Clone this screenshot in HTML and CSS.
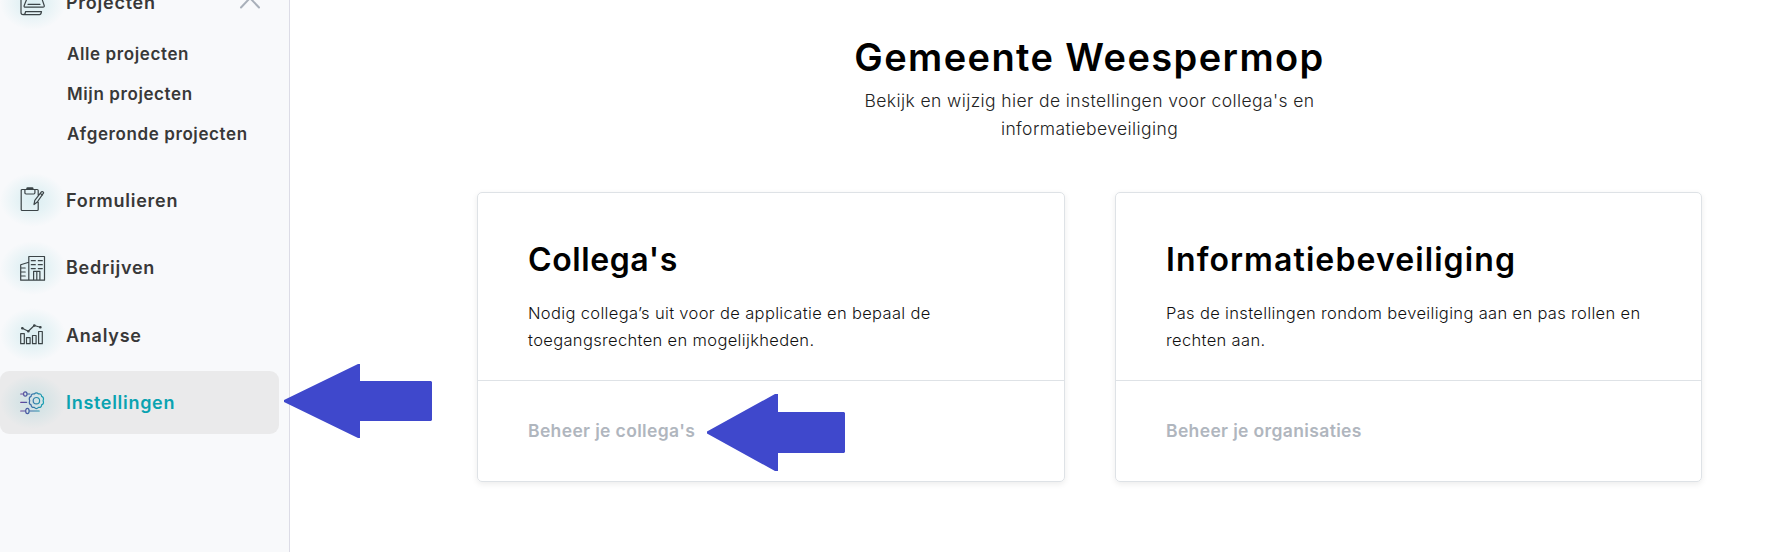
FILE: index.html
```
<!DOCTYPE html>
<html lang="nl">

<head>
    <meta charset="UTF-8">
    <meta name="viewport" content="width=device-width, initial-scale=1.0">
    <title>Instellingen</title>
    <link rel="stylesheet" href="styles.css">
</head>

<body>
    <div class="page">
        <nav class="sidebar">
            <a href="#" class="item">
                <span class="icon">
                    <svg width="26" height="26" viewBox="0 0 26 26">
                        <path d="M1 3v19.500q0 2.200 2.200 2.200h16.300q1.600 0 2-3H5.500q-.2 3-2.300 3M6.800 9 4.200 15.500q-.5 1.700 1.300 1.700H23q1.600 0 1.200-1.700L22 9M8 14.300h12" />
                    </svg>
                </span>
                <span class="label">Projecten</span>
                <svg class="chevron" width="22" height="14" viewBox="0 0 22 14">
                    <path d="M2 11.500 11 2l9 9.500" />
                </svg>
            </a>
            <ul class="sub">
                <li><a href="#">Alle projecten</a></li>
                <li><a href="#">Mijn projecten</a></li>
                <li><a href="#">Afgeronde projecten</a></li>
            </ul>
            <a href="#" class="item">
                <span class="icon">
                    <svg width="26" height="26" viewBox="0 0 26 26">
                        <path d="M5 2.500H2.200q-1 0-1 1v19q0 1 1 1h15q1 0 1-1V15M15 2.500h2.200q1 0 1 1V8M4.900 2.500v3.300q0 1.200 1.200 1.200h7.600q1.200 0 1.200-1.200V2.500zM14 17.500l.8-4.200 6.800-8.600q1.400-.6 2 1.100l-6.300 9.200zM20.300 6.500l2.200 1.500" />
                        <path class="thick" d="M7.500 1.500h4.800" />
                    </svg>
                </span>
                <span class="label">Formulieren</span>
            </a>
            <a href="#" class="item">
                <span class="icon">
                    <svg width="26" height="26" viewBox="0 0 26 26">
                        <path d="M8.800 1.500h15.700v23.700H8.800zM8.800 7.200.7 9.800v15.400h8.100M.7 13h4.500M.7 17h4.500M.7 21h4.500M11.300 5.700h4M18.300 5.700h4M11.300 9.700h4M18.300 9.700h4M11.300 13.600h4M18.300 13.600h4M13.600 25v-8.600h6.300V25M16.800 16.400V25" />
                    </svg>
                </span>
                <span class="label">Bedrijven</span>
            </a>
            <a href="#" class="item">
                <span class="icon">
                    <svg width="26" height="26" viewBox="0 0 26 26">
                        <path d="M.7 11.700h3.600v10H.7zM6.500 15.700h3.600v6H6.500zM12.500 13.500h3.600v8.200h-3.600zM18.600 9.500h3.700v12.200h-3.700zM2.300 6.300l6 3 6-5.800 6 1.800" />
                        <path class="dots" d="M2.300 6.300h.1M8.300 9.300h.1M14.300 3.500h.1M20.300 5.300h.1" />
                    </svg>
                </span>
                <span class="label">Analyse</span>
            </a>
            <a href="#" class="item active">
                <span class="icon">
                    <svg width="26" height="26" viewBox="0 0 26 26">
                        <defs>
                            <linearGradient id="tint" gradientUnits="userSpaceOnUse" x1="0" y1="0" x2="25" y2="0">
                                <stop offset="0" stop-color="#6b3f98" />
                                <stop offset=".35" stop-color="#3f62a6" />
                                <stop offset=".7" stop-color="#2a8cab" />
                                <stop offset="1" stop-color="#13a5b5" />
                            </linearGradient>
                        </defs>
                        <path d="M.7 5h2.900M7 5h2.800M.7 13.300h6M.7 22h5M9.200 22h10M5.300 2.800q1.700 0 1.700 2.200t-1.700 2.200T3.600 5t1.700-2.200zM7.400 19.400q1.700 0 1.700 2.600t-1.700 2.600T5.700 22t1.700-2.600z" />
                        <circle cx="16.400" cy="11.700" r="3.200" />
                        <path d="M14.300 5q2-2.400 4.200 0 3-.5 3.100 2.400 2.800 1.200 1.500 4.300 1.300 3-1.500 4.200-.1 3-3.100 2.500-2.200 2.400-4.200 0-3 .5-3.200-2.500-2.700-1.200-1.400-4.200-1.300-3.100 1.400-4.300Q11.300 4.500 14.300 5z" />
                    </svg>
                </span>
                <span class="label">Instellingen</span>
            </a>
        </nav>

        <main class="content">
            <h1>Gemeente Weespermop</h1>
            <p class="intro">Bekijk en wijzig hier de instellingen voor collega's en<br>informatiebeveiliging</p>
            <div class="cards">
                <section class="card">
                    <div class="card-body">
                        <h2>Collega's</h2>
                        <p>Nodig collega’s uit voor de applicatie en bepaal de<br>toegangsrechten en mogelijkheden.</p>
                    </div>
                    <div class="card-footer"><a href="#">Beheer je collega's</a></div>
                </section>
                <section class="card">
                    <div class="card-body">
                        <h2 class="wide">Informatiebeveiliging</h2>
                        <p>Pas de instellingen rondom beveiliging aan en pas rollen en<br>rechten aan.</p>
                    </div>
                    <div class="card-footer"><a href="#">Beheer je organisaties</a></div>
                </section>
            </div>
        </main>
    </div>

    <svg class="arrow arrow-menu" width="148" height="74" viewBox="0 0 148 74">
        <path d="M0 36 74 0h2v17h71l1 1v38l-1 1H76v17h-2L0 38z" />
    </svg>
    <svg class="arrow arrow-link" width="138" height="77" viewBox="0 0 138 77">
        <path d="M0 37.500 68 0h3v18h66l1 1v39l-1 1H71v18h-3L0 39.500z" />
    </svg>
</body>

</html>
```
FILE: styles.css
```
* {
    margin: 0;
    padding: 0;
    box-sizing: border-box;
}

body {
    overflow: hidden;
    background-color: #fff;
    font-family: Inter, "Liberation Sans", sans-serif;
    color: #000;
}

a {
    text-decoration: none;
}

.page {
    display: flex;
    height: 552px;
}

/* sidebar */
.sidebar {
    width: 290px;
    padding-right: 10px;
    background-color: #f8f9fb;
    border-right: 1px solid #dcdce6;
    overflow: hidden;
}

.item {
    display: flex;
    align-items: center;
    height: 63px;
    margin-bottom: 4.400px;
    border-radius: 9px;
    font-size: 18px;
    font-weight: 600;
    letter-spacing: 0.750px;
    color: #383838;
}

.item:first-child {
    margin-top: -29px;
    margin-bottom: 0;
}

.active {
    background-color: #eaeaeb;
    letter-spacing: 0.700px;
    color: #0aa3b1;
}

.icon {
    width: 66px;
    height: 54px;
    padding: 14px 20px;
    background: radial-gradient(closest-side, rgba(10, 163, 177, 0.12), rgba(10, 163, 177, 0.08) 45%, rgba(10, 163, 177, 0));
}

.icon svg {
    display: block;
    fill: none;
    stroke: #3b4447;
    stroke-width: 1.200;
    stroke-linecap: round;
    stroke-linejoin: round;
}

.icon .thick {
    stroke-width: 2.400;
}

.icon .dots {
    stroke-width: 2.600;
}

.active .icon svg {
    stroke: url(#tint);
}

.chevron {
    margin-left: auto;
    margin-right: 18px;
    fill: none;
    stroke: #a9b0ba;
    stroke-width: 2;
    stroke-linecap: round;
}

.sub {
    margin-bottom: 14.800px;
    list-style: none;
}

.sub a {
    display: block;
    padding-left: 67px;
    line-height: 40px;
    font-size: 17px;
    font-weight: 600;
    letter-spacing: 0.600px;
    color: #383838;
}

/* content */
.content {
    flex: 1;
    padding: 34px 82px 0 187px;
}

h1 {
    line-height: 46px;
    font-size: 38px;
    font-weight: 600;
    letter-spacing: 1.400px;
    text-align: center;
}

.intro {
    margin-top: 7px;
    line-height: 28px;
    font-size: 17.500px;
    font-weight: 300;
    letter-spacing: 0.400px;
    text-align: center;
    color: #222;
}

.cards {
    display: grid;
    grid-template-columns: 588px 587px;
    gap: 50px;
    margin-top: 49px;
}

.card {
    height: 290px;
    border: 1px solid #dee2e6;
    border-radius: 5px;
    box-shadow: 0 2px 6px rgba(0, 0, 0, 0.08);
}

.card-body {
    height: 188px;
    padding: 47px 50px 0;
    border-bottom: 1px solid #dee2e6;
}

h2 {
    line-height: 40px;
    font-size: 32px;
    font-weight: 600;
    letter-spacing: 0.600px;
}

.wide {
    letter-spacing: 1.100px;
}

.card p {
    margin-top: 20px;
    line-height: 27px;
    font-size: 16.500px;
    font-weight: 300;
    letter-spacing: 0.340px;
    color: #111;
}

.card-footer {
    display: flex;
    align-items: center;
    height: 98px;
    padding: 0 50px;
}

.card-footer a {
    font-size: 17.500px;
    font-weight: 600;
    letter-spacing: 0.360px;
    color: #b0b6be;
}

/* pointers over the page */
.arrow {
    position: absolute;
    fill: #3f48cc;
}

.arrow-menu {
    left: 284px;
    top: 364px;
}

.arrow-link {
    left: 707px;
    top: 394px;
}
```
